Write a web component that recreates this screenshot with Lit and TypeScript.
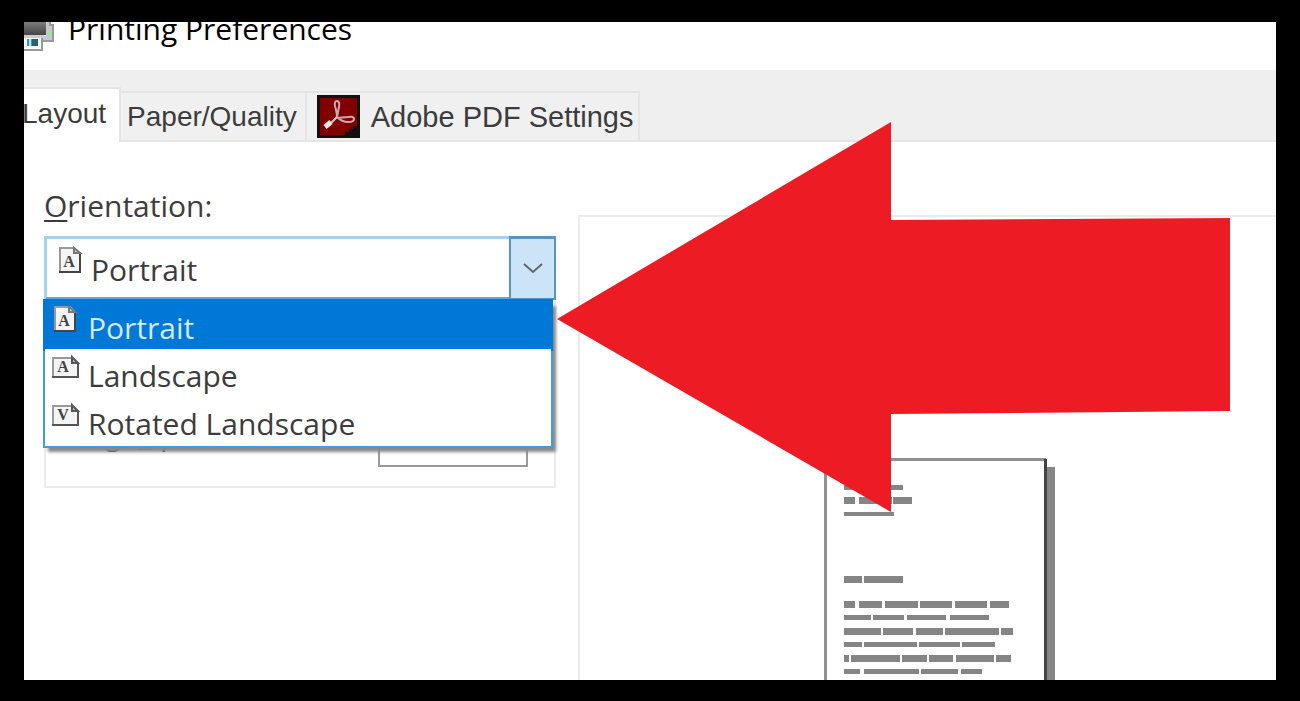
import { LitElement, html, css, svg } from "lit";
import { customElement, property, state } from "lit/decorators.js";

type Orientation = "portrait" | "landscape" | "rotated";

const OPTIONS: { id: Orientation; label: string }[] = [
  { id: "portrait", label: "Portrait" },
  { id: "landscape", label: "Landscape" },
  { id: "rotated", label: "Rotated Landscape" },
];

/* Each line of the sample document is a list of [start, end] word runs. */
const LINES: { y: number; h: number; runs: [number, number][] }[] = [
  { y: 27, h: 5, runs: [[20, 36], [38, 79]] },
  { y: 39, h: 7, runs: [[20, 31], [35, 68], [69, 88]] },
  { y: 54, h: 4, runs: [[20, 70]] },
  { y: 118, h: 7, runs: [[20, 38], [40, 79]] },
  { y: 143, h: 7, runs: [[20, 31], [35, 58], [61, 94], [96, 128], [131, 163], [166, 185]] },
  { y: 157, h: 5, runs: [[20, 47], [49, 80], [83, 122], [126, 165]] },
  { y: 170, h: 7, runs: [[20, 57], [59, 89], [92, 119], [121, 175], [177, 189]] },
  { y: 184, h: 5, runs: [[20, 38], [40, 93], [95, 136], [138, 171]] },
  { y: 197, h: 7, runs: [[20, 25], [27, 76], [78, 103], [105, 129], [132, 170], [172, 187]] },
  { y: 211, h: 5, runs: [[20, 36], [40, 95], [97, 134], [137, 158]] },
];

@customElement("sheet-icon")
export class SheetIcon extends LitElement {
  @property() kind: Orientation = "portrait";

  static styles = css`
    :host { display: block; width: 28px; height: 28px; }
    .icon { display: block; overflow: visible; }
    .letter { font-family: "Liberation Serif", serif; font-weight: 700; fill: #444; }
  `;

  render() {
    if (this.kind === "portrait") {
      return html`<svg class="icon" width="28" height="28" aria-hidden="true">
        <path d="M2 1H18L24 7V27H2Z" fill="#f4f4f4" />
        <path d="M3 26V2H18" fill="none" stroke="#999" stroke-width="2" />
        <path d="M2 26H23V6" fill="none" stroke="#444" stroke-width="2" />
        <path d="M17 2V7H23Z" fill="#ddd" stroke="#777" stroke-width="2" />
        <text class="letter" x="12" y="21" font-size="16" text-anchor="middle">A</text>
      </svg>`;
    }
    return html`<svg class="icon" width="28" height="28" aria-hidden="true">
      <path d="M0 4H20L27 10V24H0Z" fill="#f4f4f4" />
      <path d="M1 24V5H20" fill="none" stroke="#999" stroke-width="2" />
      <path d="M0 24H26V10" fill="none" stroke="#555" stroke-width="2" />
      <path d="M20 4V10H26Z" fill="#bbb" stroke="#555" stroke-width="2" />
      <text class="letter" x="11" y="19" font-size="16" text-anchor="middle">
        ${this.kind === "landscape" ? "A" : "V"}
      </text>
    </svg>`;
  }
}

@customElement("app-root")
export class AppRoot extends LitElement {
  @state() private selected: Orientation = "portrait";
  @state() private tab = 0;

  static styles = css`
    :host {
      display: block;
      box-sizing: border-box;
      height: 100vh;
      padding: 22px 24px 21px;
      background: #000;
      color: #3c3c3c;
      font: 30px/40px "Open Sans", "Noto Sans", sans-serif;
    }
    * { box-sizing: border-box; }
    button, select, input { font: inherit; color: inherit; margin: 0; border-radius: 0; }

    .window {
      position: relative;
      display: flex;
      flex-direction: column;
      height: 100%;
      overflow: hidden;
      background: #fff;
    }

    .titlebar { display: flex; gap: 14px; height: 48px; flex: none; color: #000; }
    .printer { display: block; width: 30px; height: 30px; flex: none; }
    .title { margin: 0; font-size: 30px; font-weight: 400; line-height: 14px; }

    .tabs {
      display: flex;
      align-items: flex-end;
      flex: none;
      height: 72px;
      background: #efefef;
      border-bottom: 2px solid #e5e5e5;
      font-family: "Liberation Sans", Arial, sans-serif;
      font-size: 28px;
    }
    .tab {
      display: flex;
      align-items: center;
      gap: 11px;
      height: 49px;
      padding: 0 8px 0 6px;
      border: 2px solid #e5e5e5;
      border-width: 2px 2px 0 0;
      background: #f0f0f0;
      white-space: nowrap;
    }
    .tab.active {
      height: 55px;
      margin: 0 0 -2px -8px;
      padding: 0 13px 4px 6px;
      background: #fff;
    }
    .tab.pdf { padding: 0 5px 0 10px; font-size: 29px; }
    .acrobat { display: block; width: 43px; height: 43px; }

    .panel { display: flex; gap: 22px; flex: 1; min-height: 0; padding-left: 20px; }
    .settings { width: 512px; flex: none; padding-top: 44px; }
    .label { display: block; }
    .label u { text-decoration-thickness: 2px; text-underline-offset: 3px; }

    .combo {
      position: relative;
      display: grid;
      grid-template-columns: 1fr 47px;
      height: 64px;
      margin-top: 10px;
    }
    .select {
      grid-area: 1 / 1 / 2 / 3;
      appearance: none;
      padding: 4px 48px 0 44px;
      border: 3px solid #a6d0f3;
      border-bottom-color: #59a8e8;
      background: #fff;
      outline: none;
    }
    .current { grid-area: 1 / 1; margin: 10px 0 0 13px; pointer-events: none; }
    .drop {
      grid-area: 1 / 2;
      display: grid;
      place-items: center;
      border: 2px solid #5793c3;
      border-width: 3px 2px 2px;
      background: #cce4f7;
      pointer-events: none;
    }

    .list {
      position: absolute;
      top: 100%;
      left: -1px;
      right: 3px;
      z-index: 1;
      margin: 0;
      padding: 1px 0;
      list-style: none;
      border: 2px solid #429ce3;
      border-top: 0;
      background: #fff;
      box-shadow: 4px 5px 3px -1px #888;
    }
    .option {
      display: flex;
      gap: 8px;
      width: 100%;
      height: 48px;
      padding: 4px 0 0 7px;
      border: 0;
      background: #fff;
      text-align: left;
      white-space: nowrap;
    }
    .option span { padding-top: 3px; }
    .option.on { background: #0078d7; color: #d4e9fb; box-shadow: 0 0 0 2px #0078d7; }

    .group {
      display: flex;
      gap: 8px;
      height: 188px;
      padding: 114px 26px 0 24px;
      border: 2px solid #ebebeb;
      border-top: 0;
    }
    .pages { flex: 1; height: 44px; white-space: nowrap; }
    .pages u { text-decoration-thickness: 2px; text-underline-offset: 3px; }
    .count { width: 150px; height: 53px; border: 2px solid #999; background: #fff; padding: 0 16px 14px; }

    .preview {
      flex: 1;
      margin-top: 73px;
      padding: 241px 0 0 244px;
      border: solid #ebebeb;
      border-width: 2px 0 0 2px;
      overflow: hidden;
    }
    .sheet { display: block; }
    .arrow { position: absolute; left: 533px; top: 100px; z-index: 2; pointer-events: none; }
  `;

  private printer() {
    return html`<svg class="printer" viewBox="0 0 30 30" aria-hidden="true">
      <defs>
        <linearGradient id="body" x2="0" y2="1">
          <stop offset="0" stop-color="#7d7d7d" />
          <stop offset="1" stop-color="#454545" />
        </linearGradient>
      </defs>
      <path d="M0 0H22V13H0Z" fill="url(#body)" />
      <path d="M22 0H26V3H28V20H18V14H22Z" fill="#c3c8d2" />
      <path d="M26 0V3H29V19H19" fill="none" stroke="#999" stroke-width="2" />
      <rect x="24" y="10" width="3" height="3" fill="#8cf27c" />
      <path d="M0 13H20V16H0Z" fill="#c8ced6" />
      <path d="M0 16H18V27H0Z" fill="#fff" />
      <path d="M0 28H18V16" fill="none" stroke="#999" stroke-width="2" />
      <rect x="3" y="17" width="11" height="7" fill="#3d8fdb" />
      <rect x="8" y="17" width="6" height="7" fill="#2a6468" />
      <path d="M6 17V24" stroke="#bfe4f8" stroke-width="2" />
    </svg>`;
  }

  private acrobat() {
    return html`<svg class="acrobat" viewBox="0 0 43 43" aria-hidden="true">
      <rect width="43" height="43" fill="#151010" />
      <path d="M3 3H40V31H36V34H32V37H28V40H3Z" fill="#800000" />
      <path
        d="M20 6Q17 6 18 11Q20 18 20 22Q16 27 9 31M20 6Q23 6 22 12L20 22Q25 27 31 27Q37 27 37 24Q37 21 31 22L20 23"
        fill="none" stroke="#cfa9b0" stroke-width="2"
      />
      <path d="M8 32L14 27" stroke="#f2e6e8" stroke-width="5" />
      <path d="M14 28L20 22" stroke="#d8b8c0" stroke-width="2" />
    </svg>`;
  }

  render() {
    return html`
      <main class="window">
        <header class="titlebar">
          ${this.printer()}
          <h1 class="title">Printing Preferences</h1>
        </header>

        <div class="tabs" role="tablist">
          <button class="tab active" role="tab" aria-selected=${this.tab === 0} @click=${() => (this.tab = 0)}>Layout</button>
          <button class="tab" role="tab" aria-selected=${this.tab === 1} @click=${() => (this.tab = 1)}>Paper/Quality</button>
          <button class="tab pdf" role="tab" aria-selected=${this.tab === 2} @click=${() => (this.tab = 2)}>
            ${this.acrobat()} Adobe PDF Settings
          </button>
        </div>

        <div class="panel">
          <section class="settings">
            <label class="label" for="orientation"><u>O</u>rientation:</label>
            <div class="combo">
              <select
                class="select"
                id="orientation"
                .value=${this.selected}
                @change=${(e: Event) => (this.selected = (e.target as HTMLSelectElement).value as Orientation)}
              >
                ${OPTIONS.map((o) => html`<option value=${o.id}>${o.label}</option>`)}
              </select>
              <sheet-icon class="current" .kind=${this.selected}></sheet-icon>
              <span class="drop">
                <svg width="22" height="14" aria-hidden="true">
                  <path d="M2 2L11 10L20 2" fill="none" stroke="#666" stroke-width="2" />
                </svg>
              </span>
              <ul class="list">
                ${OPTIONS.map(
                  (o) => html`<li>
                    <button class="option ${o.id === this.selected ? "on" : ""}" @click=${() => (this.selected = o.id)}>
                      <sheet-icon .kind=${o.id}></sheet-icon><span>${o.label}</span>
                    </button>
                  </li>`
                )}
              </ul>
            </div>
            <div class="group">
              <label class="pages" for="pages">Page<u>s</u> per Sheet</label>
              <input class="count" id="pages" value="1" />
            </div>
          </section>

          <section class="preview" aria-label="Preview">
            <svg class="sheet" width="232" height="320" aria-hidden="true">
              <rect x="222" y="9" width="9" height="311" fill="#858585" />
              <rect x="1" y="1" width="221" height="330" fill="#fff" />
              <path d="M1.500 320V1.500H222" fill="none" stroke="#909090" stroke-width="3" />
              <path d="M221.500 1V320" stroke="#444" stroke-width="3" />
              ${LINES.map((l) =>
                l.runs.map(([a, b]) => svg`<rect x=${a} y=${l.y} width=${b - a} height=${l.h} fill="#858585" />`)
              )}
            </svg>
          </section>
        </div>

        <svg class="arrow" width="674" height="390" aria-hidden="true">
          <path d="M0 197L334 0V98L673 96V389L673 289L334 292V390Z" fill="#ed1c24" />
        </svg>
      </main>
    `;
  }
}
